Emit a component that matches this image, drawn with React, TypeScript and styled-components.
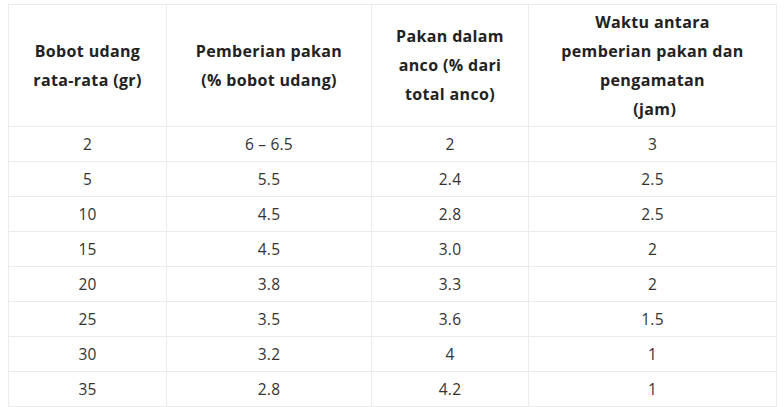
import styled, { createGlobalStyle } from "styled-components";

const GlobalStyle = createGlobalStyle`
  body {
    margin: 4px 0 0 8px;
    background: #ffffff;
    font-family: "Open Sans", "Noto Sans", sans-serif;
    color: #333;
  }
`;

const Table = styled.table`
  width: 768px;
  border-collapse: collapse;
  table-layout: fixed;
  font-size: 15.5px;
`;

const Col = styled.col<{ w: number }>`
  width: ${(p) => p.w}px;
`;

const HeadCell = styled.th`
  border: 1px solid #ebebeb;
  height: 121px;
  padding: 0 2px;
  font-weight: 700;
  font-size: 16px;
  letter-spacing: 0.35px;
  line-height: 29px;
  color: #222;
  text-align: center;
  vertical-align: middle;
`;

const Row = styled.tr`
  height: 35px;
`;

const Cell = styled.td`
  border: 1px solid #ebebeb;
  padding: 0 6px;
  text-align: center;
  vertical-align: middle;
  color: #333;
  letter-spacing: 0.2px;
  line-height: 20px;
`;

const headers = [
  ["Bobot udang", "rata-rata (gr)"],
  ["Pemberian pakan", "(% bobot udang)"],
  ["Pakan dalam", "anco (% dari", "total anco)"],
  ["Waktu antara", "pemberian pakan dan", "pengamatan", "\u00a0(jam)"],
];

const rows = [
  ["2", "6 \u2013 6.5", "2", "3"],
  ["5", "5.5", "2.4", "2.5"],
  ["10", "4.5", "2.8", "2.5"],
  ["15", "4.5", "3.0", "2"],
  ["20", "3.8", "3.3", "2"],
  ["25", "3.5", "3.6", "1.5"],
  ["30", "3.2", "4", "1"],
  ["35", "2.8", "4.2", "1"],
];

export default function App() {
  return (
    <>
      <GlobalStyle />
      <Table>
        <colgroup>
          <Col w={158} />
          <Col w={205} />
          <Col w={157} />
          <Col w={248} />
        </colgroup>
        <thead>
          <tr>
            {headers.map((lines, i) => (
              <HeadCell key={i}>
                {lines.map((l, j) => (
                  <span key={j}>
                    {l}
                    {j < lines.length - 1 && <br />}
                  </span>
                ))}
              </HeadCell>
            ))}
          </tr>
        </thead>
        <tbody>
          {rows.map((r, i) => (
            <Row key={i}>
              {r.map((v, j) => (
                <Cell key={j}>{v}</Cell>
              ))}
            </Row>
          ))}
        </tbody>
      </Table>
    </>
  );
}
